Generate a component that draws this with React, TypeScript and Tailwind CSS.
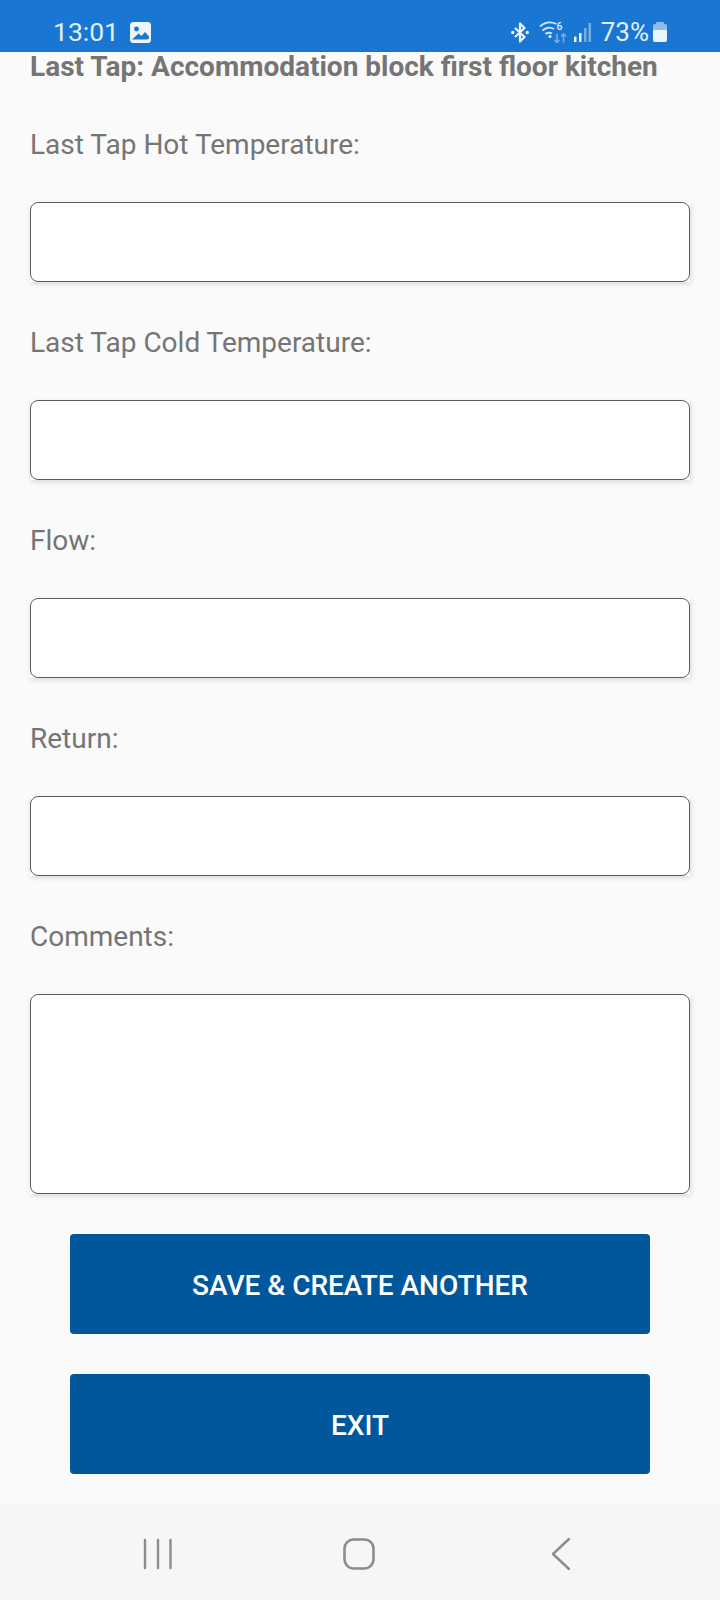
const fields = [
  "Last Tap Hot Temperature:",
  "Last Tap Cold Temperature:",
  "Flow:",
  "Return:",
];

function Field({ label, tall }: { label: string; tall?: boolean }) {
  return (
    <div className="flex flex-col">
      <div className="h-[40px] flex items-center text-[28px] leading-[40px] text-[#757575]">{label}</div>
      <div className={`mt-[37px] bg-white shadow-[1px_2px_5px_rgba(0,0,0,0.13)] ${tall ? "h-[200px]" : "h-[80px]"}`}>
        <div className="h-full rounded-[8px] border border-[#5c5c5c]" />
      </div>
    </div>
  );
}

function StatusBar() {
  return (
    <div className="h-[52px] bg-[#1976d2] flex items-end justify-between pb-[3px] pl-[53px] pr-[53px] text-white">
      <div className="flex items-center gap-[11px]">
        <span className="text-[26.500px] leading-[34px] text-[#e3f0fb]">13:01</span>
        <svg width="21" height="21" viewBox="0 0 21 21">
          <rect width="21" height="21" rx="3.500" fill="#eef6fd" />
          <circle cx="6.500" cy="7" r="2.400" fill="#1976d2" />
          <path d="M2 17.500 L8.500 11.500 L11.500 14 L15 10 L19 14.500 V15.500 Q19 17.500 17 17.500 Z" fill="#1976d2" />
        </svg>
      </div>
      <div className="flex items-center">
        <svg width="18" height="21" viewBox="0 0 18 21" fill="none" className="mr-[10px]">
          <path d="M4 6 L13.500 15 L9 19.500 V1.500 L13.500 6 L4 15" stroke="#eef6fd" strokeWidth="2.200" strokeLinejoin="round" />
          <circle cx="1.700" cy="10.500" r="1.700" fill="#eef6fd" />
          <circle cx="16.300" cy="10.500" r="1.700" fill="#eef6fd" />
        </svg>
        <svg width="28" height="22" viewBox="0 0 28 22" fill="none" className="mr-[7px]">
          <path d="M1 5.500 C6 1 12 0.500 17.500 3" stroke="#d5e6f7" strokeWidth="1.900" />
          <path d="M3.500 9.500 C7 6.500 11.500 6 15 8" stroke="#d5e6f7" strokeWidth="1.900" />
          <path d="M6.500 13 C8.500 11.500 11 11.500 13 12.500" stroke="#d5e6f7" strokeWidth="1.900" />
          <circle cx="11" cy="15.500" r="1.500" fill="#e3f0fb" />
          <text x="17.500" y="8.500" fontSize="10.500" fontWeight="500" fill="#e3f0fb" fontFamily="Roboto, sans-serif">6</text>
          <path d="M18 13 V21.500 M15.500 19 L18 21.500 L20.500 19" stroke="#76aee6" strokeWidth="1.600" />
          <path d="M24.500 21.500 V13 M22 15.500 L24.500 13 L27 15.500" stroke="#76aee6" strokeWidth="1.600" />
        </svg>
        <svg width="17" height="19" viewBox="0 0 17 19" className="mr-[10px]">
          <rect x="0" y="13.500" width="2.500" height="5.500" rx="0.500" fill="#eef6fd" />
          <rect x="5" y="10" width="2.500" height="9" rx="0.500" fill="#eef6fd" />
          <rect x="10" y="5" width="2.500" height="14" rx="0.500" fill="#76aee6" />
          <rect x="14.500" y="0" width="2.500" height="19" rx="0.500" fill="#76aee6" />
        </svg>
        <span className="text-[26px] leading-[34px] text-[#e3f0fb]">73%</span>
        <svg width="14" height="20" viewBox="0 0 14 20" className="ml-[4px]">
          <path d="M4 0 H10 Q11 0 11 1 V2 H3 V1 Q3 0 4 0 Z" fill="#8fbdeb" />
          <path d="M2 2 H12 Q14 2 14 4 V8 H0 V4 Q0 2 2 2 Z" fill="#8fbdeb" />
          <path d="M0 8 H14 V18 Q14 20 12 20 H2 Q0 20 0 18 Z" fill="#eef6fd" />
        </svg>
      </div>
    </div>
  );
}

function NavBar() {
  return (
    <div className="h-[97px] bg-[#f6f6f6] flex items-center pt-[5px] pl-[142px] gap-[169px]">
      <svg width="32" height="32" viewBox="0 0 32 32" fill="none" stroke="#8c8c8c" strokeWidth="2.400" strokeLinecap="round">
        <path d="M3 2 V30 M16 2 V30 M28.500 2 V30" />
      </svg>
      <svg width="32" height="32" viewBox="0 0 32 32" fill="none" stroke="#8c8c8c" strokeWidth="2.600">
        <rect x="1.500" y="1.500" width="29" height="29" rx="9" />
      </svg>
      <svg width="20" height="34" viewBox="0 0 20 34" fill="none" stroke="#8c8c8c" strokeWidth="2.400" strokeLinecap="round" strokeLinejoin="round" className="ml-[7px]">
        <path d="M18 2 L2 17 L18 32" />
      </svg>
    </div>
  );
}

export default function App() {
  return (
    <div className="w-[720px] h-[1600px] bg-[#fafafa] flex flex-col font-['Roboto',sans-serif]">
      <StatusBar />
      <div className="flex-1 flex flex-col">
        <div className="px-[30px] h-[30px] flex items-center text-[28px] leading-[30px] font-bold text-[#757575] whitespace-nowrap">
          Last Tap: Accommodation block first floor kitchen
        </div>
        <div className="px-[30px] mt-[43px] flex flex-col gap-[41px]">
          {fields.map((f) => (
            <Field key={f} label={f} />
          ))}
          <Field label="Comments:" tall />
        </div>
        <div className="px-[70px] mt-[40px] flex flex-col gap-[40px]">
          <button className="h-[100px] pt-[3px] rounded-[4px] bg-[#01579b] text-white text-[28px] font-medium">
            SAVE &amp; CREATE ANOTHER
          </button>
          <button className="h-[100px] pt-[3px] rounded-[4px] bg-[#01579b] text-white text-[28px] font-medium">EXIT</button>
        </div>
      </div>
      <NavBar />
    </div>
  );
}
